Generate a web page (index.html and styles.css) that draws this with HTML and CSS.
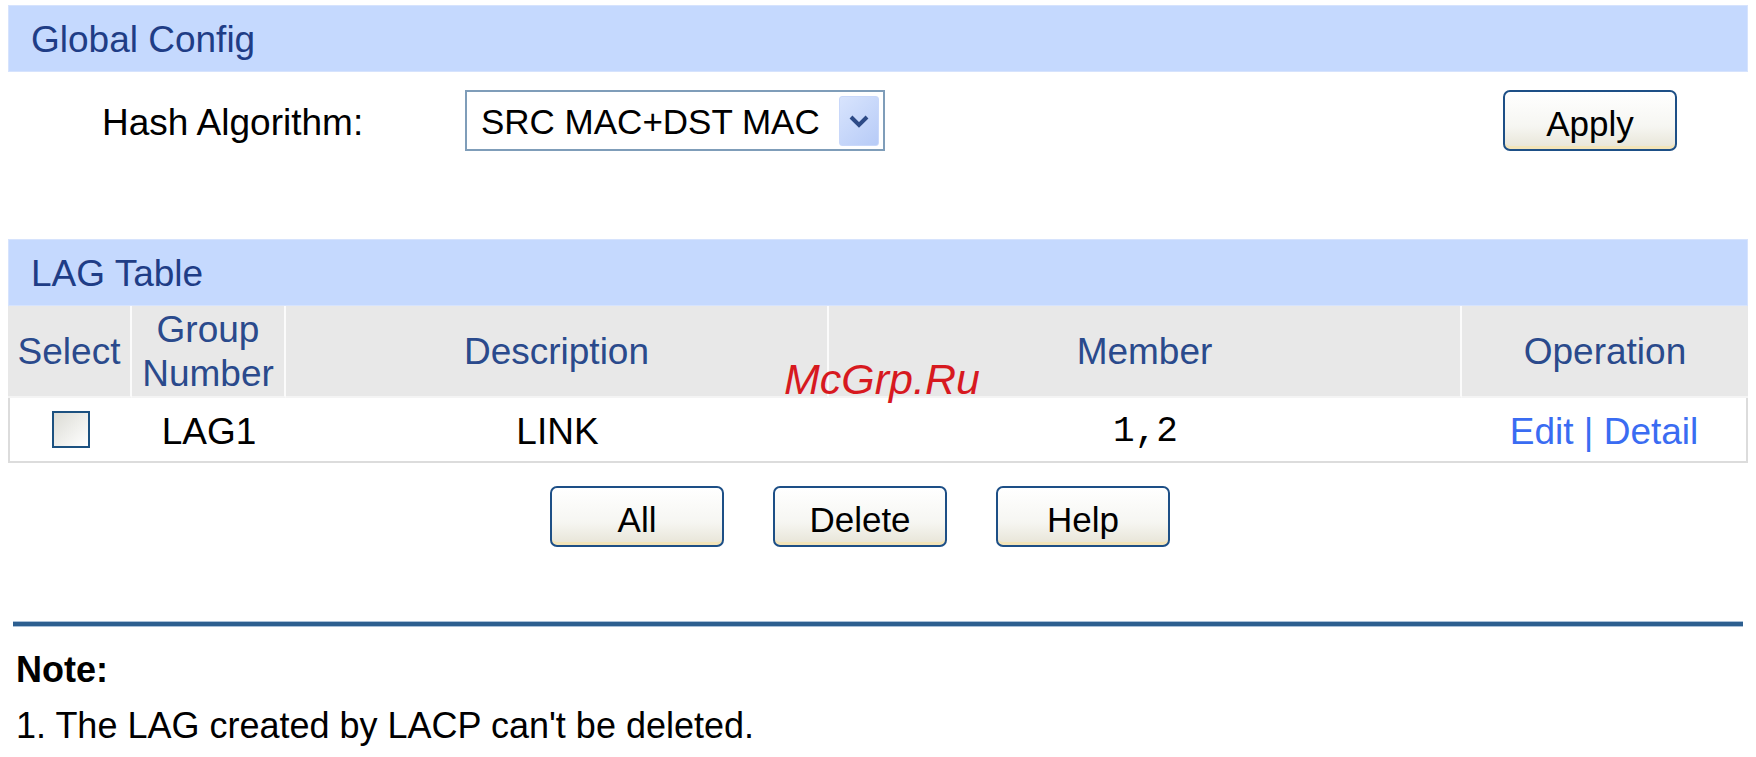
FILE: index.html
```html
<!DOCTYPE html>
<html>
  <head>
    <meta charset="utf-8" />
    <title>LAG Config</title>
    <link rel="stylesheet" href="styles.css">
  </head>
  <body>
    <main class="page">
      <!-- Global config -->
      <div class="panel-head">Global Config</div>
      <div class="config-row">
        <label class="config-label">Hash Algorithm:</label>
        <div class="select">
          <span class="select-value">SRC MAC+DST MAC</span>
          <span class="select-arrow">
            <svg width="22" height="16" viewBox="0 0 22 16">
              <path d="M3 4 L11 12 L19 4" fill="none" stroke="#2d4a86" stroke-width="4" />
            </svg>
          </span>
        </div>
        <button class="btn btn-apply">Apply</button>
      </div>

      <!-- LAG table -->
      <div class="panel-head panel-lag">LAG Table</div>
      <table class="lag-table">
        <colgroup>
          <col class="col-select" />
          <col class="col-group" />
          <col class="col-desc" />
          <col class="col-member" />
          <col />
        </colgroup>
        <thead>
          <tr>
            <th>Select</th>
            <th>Group<br />Number</th>
            <th>Description</th>
            <th>Member</th>
            <th>Operation</th>
          </tr>
        </thead>
        <tbody>
          <tr>
            <td class="cell-check"><span class="checkbox"></span></td>
            <td>LAG1</td>
            <td>LINK</td>
            <td class="mono">1,2</td>
            <td class="ops"><a class="op-link">Edit</a> | <a class="op-link">Detail</a></td>
          </tr>
        </tbody>
      </table>

      <div class="table-actions">
        <button class="btn">All</button>
        <button class="btn">Delete</button>
        <button class="btn">Help</button>
      </div>

      <hr class="rule" />

      <div class="note">
        <p class="note-title">Note:</p>
        <p class="note-line">1. The LAG created by LACP can't be deleted.</p>
      </div>

      <div class="watermark">McGrp.Ru</div>
    </main>
  </body>
</html>
```

FILE: styles.css
```css
/* Basics */
html,
body {
  margin: 0;
  padding: 0;
  background: #ffffff;
}
body {
  padding: 5px 8px 0;
  font-family: "Liberation Sans", Arial, sans-serif;
  font-size: 37px;
  color: #000;
}
* {
  box-sizing: border-box;
}
.page {
  position: relative;
}

/* Section heads */
.panel-head {
  height: 67px;
  line-height: 68px;
  padding-left: 22px;
  background: #c5d9fe;
  border: 1px solid #d6e3fd;
  color: #1f3d86;
}
.panel-lag {
  margin-top: 88px;
}

/* Global config row */
.config-row {
  display: flex;
  align-items: center;
  margin-top: 18px;
  height: 61px;
  padding-left: 94px;
  padding-right: 71px;
}
.config-label {
  width: 363px;
  padding-top: 4px;
}
.select {
  display: flex;
  align-items: center;
  width: 420px;
  height: 61px;
  border: 2px solid #7f9db9;
  padding: 0 4px 0 14px;
  font-size: 35px;
}
.select-value {
  flex: 1;
  padding-top: 3px;
}
.select-arrow {
  display: flex;
  align-items: center;
  justify-content: center;
  width: 40px;
  height: 50px;
  border-radius: 3px;
  background: linear-gradient(135deg, #d8e4fd, #b7cbf7);
  border: 1px solid #c9d8fa;
}

/* Buttons */
.btn {
  width: 174px;
  height: 61px;
  padding: 6px 0 0;
  font-family: "Liberation Sans", Arial, sans-serif;
  font-size: 35px;
  color: #000;
  border: 2px solid #1d4f86;
  border-radius: 7px;
  background: linear-gradient(#ffffff, #f6f6f2 60%, #e7e4d6);
  box-shadow: inset 0 -4px 0 -1px #f3e4b8;
}
.btn-apply {
  margin-left: auto;
}

/* Table */
.lag-table {
  width: 100%;
  border-collapse: separate;
  border-spacing: 0;
  table-layout: fixed;
  text-align: center;
}
.col-select {
  width: 124px;
}
.col-group {
  width: 154px;
}
.col-desc {
  width: 543px;
}
.col-member {
  width: 633px;
}
.lag-table th {
  height: 90px;
  padding: 2px 0 0;
  background: #e8e8e8;
  color: #2a4a8c;
  font-weight: normal;
  line-height: 44px;
  border-right: 2px solid #fbfbfb;
  border-bottom: 2px solid #f4f4f4;
}
.lag-table th:last-child {
  border-right: 0;
}
.lag-table td {
  height: 65px;
  padding: 4px 0 0;
  border-bottom: 2px solid #dcdcdc;
}
.lag-table td:first-child {
  border-left: 2px solid #dcdcdc;
}
.lag-table td:last-child {
  border-right: 2px solid #dcdcdc;
}
.lag-table td.cell-check {
  padding: 0 0 4px;
}
.mono {
  font-family: "Liberation Mono", "Courier New", monospace;
  font-size: 36px;
}
.checkbox {
  display: inline-block;
  width: 38px;
  height: 37px;
  vertical-align: middle;
  border: 2px solid #1c5180;
  background: linear-gradient(135deg, #dcdcd5, #ffffff);
}
.ops {
  color: #3a6cf2;
}
.op-link {
  color: #3a6cf2;
  cursor: pointer;
}

.table-actions {
  display: flex;
  justify-content: center;
  gap: 49px;
  margin-top: 23px;
  padding-right: 36px;
}

/* Note */
.rule {
  height: 4px;
  margin: 75px 5px 0;
  border: 0;
  background: #2d5f90;
  box-shadow: 0 -1px 0 #a9c0d8, 0 1px 0 #a9c0d8;
}
.note p {
  margin: 0;
  line-height: 44px;
  font-size: 36px;
}
.note-title {
  margin-top: 22px !important;
  padding-left: 8px;
  font-weight: bold;
}
.note-line {
  margin-top: 12px !important;
  padding-left: 8px;
}

/* Overlay */
.watermark {
  position: absolute;
  left: 776px;
  top: 350px;
  font-family: "Liberation Sans", Arial, sans-serif;
  font-style: italic;
  font-size: 43px;
  color: #d7191f;
}
```
